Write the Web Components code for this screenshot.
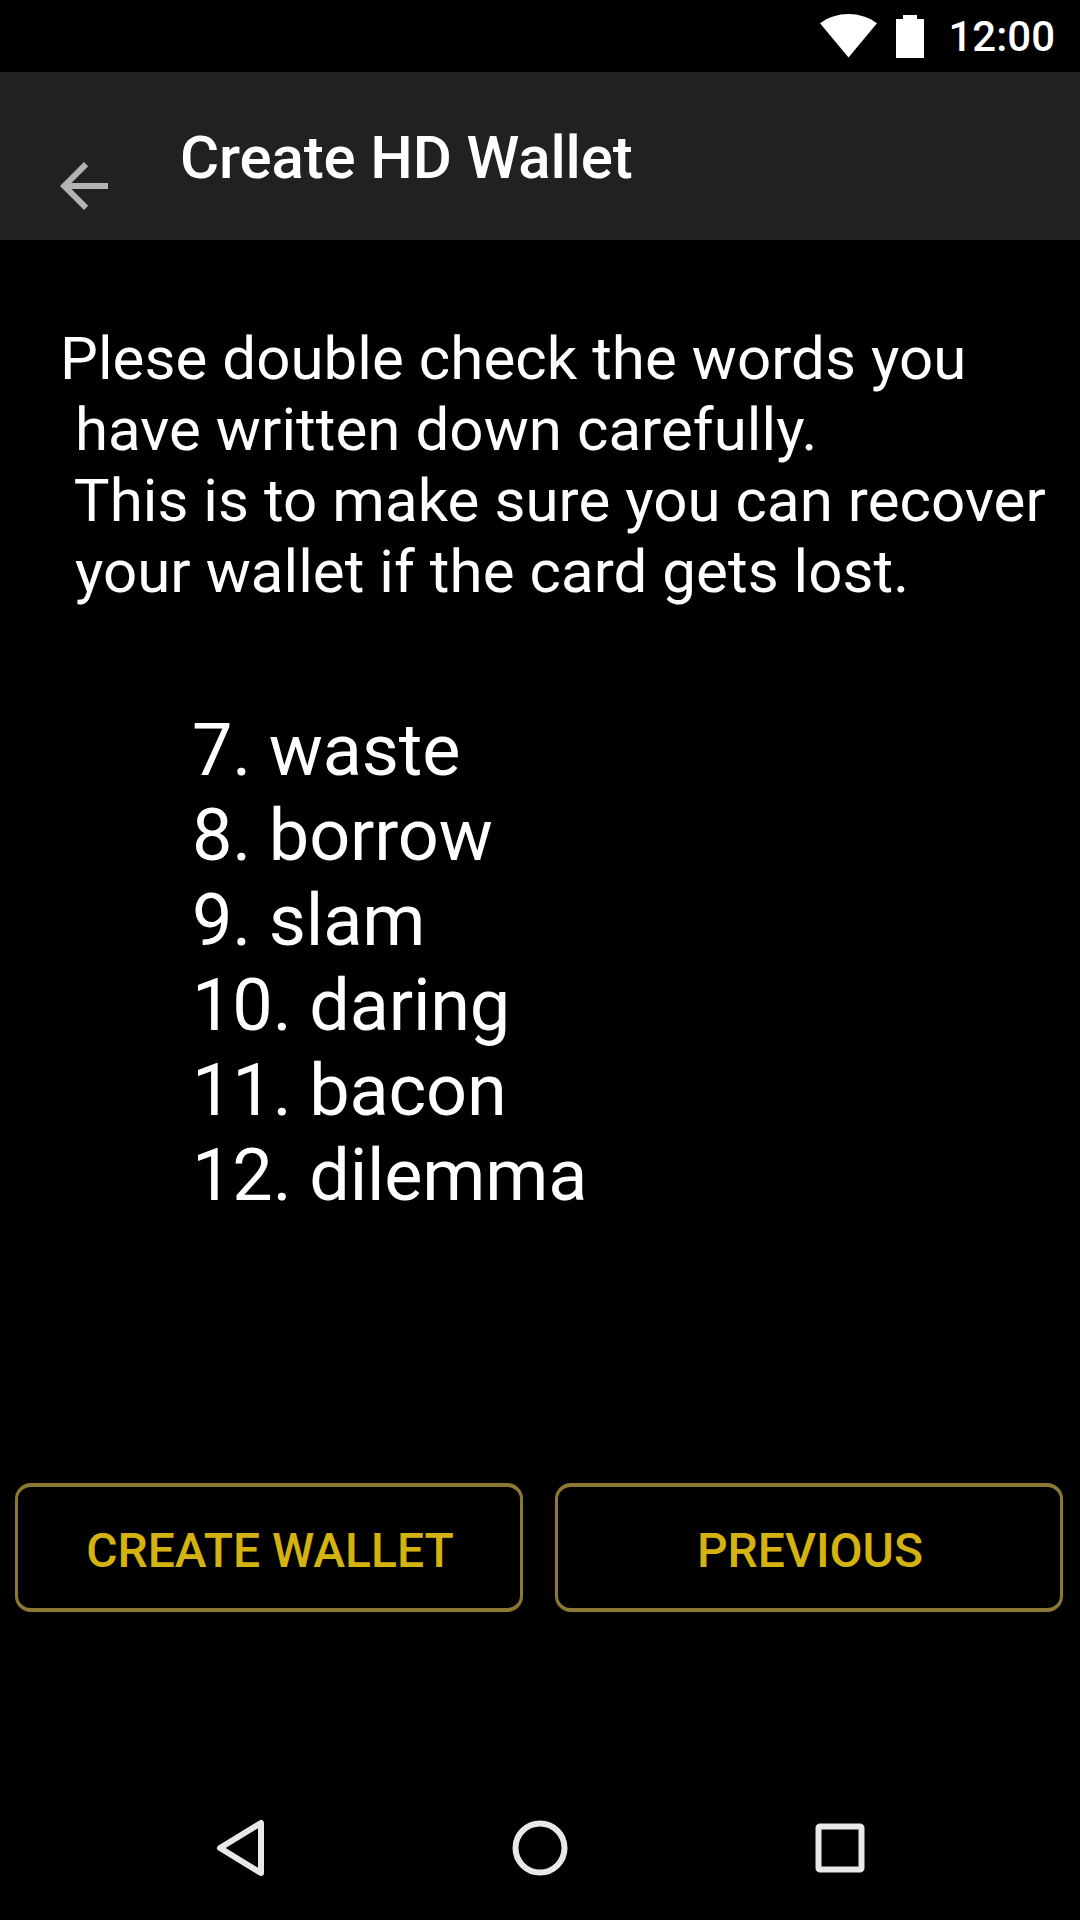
<!DOCTYPE html>
<html>
<head>
<meta charset="utf-8">
<title>Create HD Wallet</title>
<style>
  html, body { margin: 0; padding: 0; background: #000; }
  body { width: 1080px; height: 1920px; font-family: Roboto, "Liberation Sans", sans-serif; color: #fff; }
  wallet-screen { height: 1920px; }
</style>
</head>
<body>
<wallet-screen>
  <status-bar slot="status">12:00</status-bar>
  <app-bar slot="bar">Create HD Wallet</app-bar>
  <word-check slot="body">
    <span slot="intro">Plese double check the words you
 have written down carefully.
 This is to make sure you can recover
 your wallet if the card gets lost.</span>
    <span slot="words">7. waste
8. borrow
9. slam
10. daring
11. bacon
12. dilemma</span>
  </word-check>
  <div slot="actions">
    <outline-button>CREATE WALLET</outline-button>
    <outline-button>PREVIOUS</outline-button>
  </div>
  <nav-bar slot="nav"></nav-bar>
</wallet-screen>

<script>
class WalletScreen extends HTMLElement {
  constructor() {
    super();
    this.attachShadow({ mode: "open" });
  }

  connectedCallback() {
    this.shadowRoot.innerHTML = `
      <style>
        :host { display: flex; flex-direction: column; background: #000; }
        .main { flex: 1; display: flex; flex-direction: column; }
        ::slotted([slot="actions"]) {
          display: grid;
          grid-template-columns: 508px 508px;
          gap: 32px;
          padding: 0 17px 0 15px;
          margin-bottom: 164px;
        }
      </style>
      <slot name="status"></slot>
      <slot name="bar"></slot>
      <div class="main"><slot name="body"></slot></div>
      <slot name="actions"></slot>
      <slot name="nav"></slot>
    `;
  }
}

class StatusBar extends HTMLElement {
  constructor() {
    super();
    this.attachShadow({ mode: "open" });
  }

  connectedCallback() {
    this.shadowRoot.innerHTML = `
      <style>
        :host {
          display: flex;
          justify-content: flex-end;
          align-items: center;
          height: 72px;
          padding-right: 25px;
          box-sizing: border-box;
          font-size: 42px;
          font-weight: 500;
          color: #fff;
        }
        svg { display: block; }
        .wifi { margin-right: 19px; }
        .battery { margin-right: 24px; }
      </style>
      <svg class="wifi" width="57" height="44" viewBox="0 0 57 44"><path fill="#fff" d="M28.5 43.5 0 9.2C8 3.4 17.8 0 28.5 0S49 3.4 57 9.2z"/></svg>
      <svg class="battery" width="28" height="43" viewBox="0 0 28 43"><path fill="#fff" d="M7 0h14v4h7v39H0V4h7z"/></svg>
      <slot></slot>
    `;
  }
}

class AppBar extends HTMLElement {
  constructor() {
    super();
    this.attachShadow({ mode: "open" });
  }

  connectedCallback() {
    this.shadowRoot.innerHTML = `
      <style>
        :host {
          display: flex;
          height: 168px;
          background: #212121;
          box-sizing: border-box;
          padding-left: 48px;
        }
        svg { display: block; margin-top: 78px; }
        .title {
          margin: 51px 0 0 60px;
          font-size: 60px;
          font-weight: 500;
          line-height: 70px;
          letter-spacing: -0.15px;
          color: #fff;
        }
      </style>
      <svg width="72" height="72" viewBox="0 0 24 24"><path fill="#b3b3b3" d="M20 11H7.83l5.59-5.59L12 4l-8 8 8 8 1.41-1.41L7.83 13H20v-2z"/></svg>
      <div class="title"><slot></slot></div>
    `;
  }
}

class WordCheck extends HTMLElement {
  constructor() {
    super();
    this.attachShadow({ mode: "open" });
  }

  connectedCallback() {
    this.shadowRoot.innerHTML = `
      <style>
        :host { display: block; padding: 83px 0 0 60px; color: #fff; }
        .intro { font-size: 60px; line-height: 71px; letter-spacing: 0.06px; white-space: pre; }
        .words { margin: 101px 0 0 132px; font-size: 72px; line-height: 85px; letter-spacing: -0.15px; white-space: pre; }
      </style>
      <div class="intro"><slot name="intro"></slot></div>
      <div class="words"><slot name="words"></slot></div>
    `;
  }
}

class OutlineButton extends HTMLElement {
  constructor() {
    super();
    this.attachShadow({ mode: "open" });
  }

  connectedCallback() {
    this.shadowRoot.innerHTML = `
      <style>
        :host {
          display: flex;
          align-items: center;
          justify-content: center;
          height: 129px;
          box-sizing: border-box;
          padding: 6px 0 0 2px;
          border-style: solid;
          border-color: #8c7733;
          border-width: 4px 3px;
          border-radius: 16px;
          box-shadow: 0 0 1px #5a4c20;
          font-size: 48px;
          font-weight: 500;
          color: #d4b20f;
        }
      </style>
      <slot></slot>
    `;
  }
}

class NavBar extends HTMLElement {
  constructor() {
    super();
    this.attachShadow({ mode: "open" });
  }

  connectedCallback() {
    this.shadowRoot.innerHTML = `
      <style>
        :host {
          display: grid;
          grid-template-columns: repeat(3, 300px);
          justify-content: center;
          align-items: center;
          height: 144px;
        }
        svg { display: block; justify-self: center; fill: none; stroke: #e8e8e8; stroke-width: 6; stroke-linejoin: round; }
      </style>
      <svg width="60" height="60" viewBox="0 0 60 60"><path d="M10 30 51 5v50z"/></svg>
      <svg width="60" height="60" viewBox="0 0 60 60"><circle cx="30" cy="30" r="24.5"/></svg>
      <svg width="60" height="60" viewBox="0 0 60 60"><rect x="8.5" y="8.5" width="43" height="43" rx="1.5"/></svg>
    `;
  }
}

customElements.define("wallet-screen", WalletScreen);
customElements.define("status-bar", StatusBar);
customElements.define("app-bar", AppBar);
customElements.define("word-check", WordCheck);
customElements.define("outline-button", OutlineButton);
customElements.define("nav-bar", NavBar);
</script>
</body>
</html>
